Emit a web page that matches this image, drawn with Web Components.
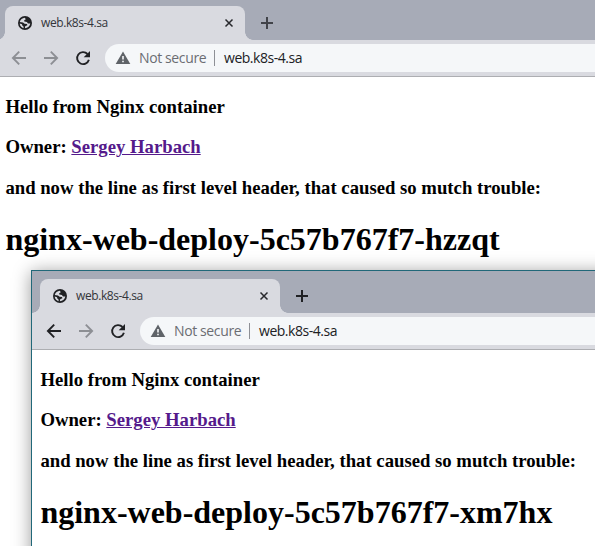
<!DOCTYPE html>
<html lang="en">
<head>
<meta charset="utf-8">
<title>web.k8s-4.sa</title>
<style>
html, body { margin: 0; height: 100%; overflow: hidden; background: #fff; }
</style>
</head>
<body>
<desk-top></desk-top>
<script>
const define = (name, html) => customElements.define(name, class extends HTMLElement {
  constructor() {
    super();
    const t = document.createElement('template');
    t.innerHTML = html;
    this.attachShadow({ mode: 'open' }).append(t.content.cloneNode(true));
  }
});

define('browser-tab', `
<style>
:host { display: flex; box-sizing: border-box; position: relative; width: 240px; height: 34px; padding: 0 9px 0 13px;
  align-items: center; background: #d9dae0; border-radius: 8px 8px 0 0;
  font: 12px/16px "Open Sans", "Noto Sans", sans-serif; color: #33353a; }
:host::before, :host::after { content: ""; position: absolute; bottom: 0; width: 8px; height: 8px; }
:host::before { left: -8px; background: radial-gradient(circle at 0 0, transparent 7.5px, #d9dae0 8px); }
:host::after { right: -8px; background: radial-gradient(circle at 100% 0, transparent 7.5px, #d9dae0 8px); }
.title { flex: 1; margin-left: 9px; letter-spacing: -0.41px; white-space: nowrap; }
svg { flex: none; display: block; }
</style>
<svg width="14" height="14" viewBox="0 0 14 14"><circle cx="7" cy="7" r="7" fill="#202124"/>
<path d="M6.800 1.700C4.400 1.900 2.300 3.500 1.800 5.900L5 6.400 6.600 7.700 9 8.100 9.400 9.300 7.200 10.200 6.900 12.300C9.700 12.300 12 10.300 12.300 7.600L10 7.500 8.900 5.900 6.300 5.400 6.200 4.200 7.800 3.300Z" fill="#d9dae0"/>
<path d="M1.700 7.600C1.900 10 3.500 11.700 5.600 12.200L5.500 10.500 4.300 9.600 4 8.300Z" fill="#d9dae0"/></svg>
<span class="title"><slot></slot></span>
<svg width="14" height="14" viewBox="0 0 14 14"><path d="M3.500 3.500l7 7M10.500 3.500l-7 7" stroke="#28292d" stroke-width="1.500" fill="none"/></svg>
`);

define('address-bar', `
<style>
:host { display: flex; flex: 1; box-sizing: border-box; height: 28px; padding-left: 10px; align-items: center;
  background: #f5f7f9; border-radius: 14px 0 0 14px; white-space: nowrap;
  font: 14px/18px "Open Sans", "Noto Sans", sans-serif; color: #202124; }
svg { flex: none; display: block; }
.state { width: 67px; margin-left: 8px; color: #6b6d73; letter-spacing: -0.38px; }
i { width: 1px; height: 16px; margin: 0 9px 0 8px; background: #8e9096; }
.url { letter-spacing: -0.47px; }
</style>
<svg width="16" height="16" viewBox="0 0 16 16"><path d="M8 1.500L15.300 14H.7Z" fill="#5f6368"/><path d="M7.200 6h1.600v3.500H7.200zM7.200 10.700h1.600v1.500H7.200z" fill="#f5f7f9"/></svg>
<span class="state">Not secure</span><i></i><span class="url"><slot></slot></span>
`);

define('browser-window', `
<style>
:host { display: block; background: #fff; }
.strip { display: flex; height: 42px; padding-left: 8px; align-items: flex-end; background: #a7abb7; }
.plus { display: block; margin: 0 0 10px 15px; color: var(--plus, #414349); }
.bar { display: flex; height: 36px; align-items: center; background: #d9dae0; border-bottom: 1px solid #adaeb2; }
.nav { display: flex; gap: 16px; padding: 0 14px; color: #202124; }
.nav svg { display: block; fill: none; stroke: currentColor; stroke-width: 1.900; }
.back { color: var(--back, #202124); }
.forward { color: #8d8f94; }
.page { display: flow-root; padding: 0 8px 0 8.400px; }
</style>
<div class="strip"><browser-tab>web.k8s-4.sa</browser-tab>
<svg class="plus" width="14" height="14" viewBox="0 0 14 14"><path d="M7 1v12M1 7h12" stroke="currentColor" stroke-width="2"/></svg></div>
<div class="bar"><div class="nav">
<svg class="back" width="16" height="16" viewBox="0 0 16 16"><path d="M15 8H2.200M8.200 1.700L1.900 8l6.300 6.300"/></svg>
<svg class="forward" width="16" height="16" viewBox="0 0 16 16"><path d="M1 8h12.800M7.800 1.700L14.100 8l-6.300 6.300"/></svg>
<svg width="16" height="16" viewBox="0 0 16 16"><path d="M12.500 4A6 6 0 1 0 13.900 9.800"/><path d="M15 1v6.300H8.700Z" fill="currentColor" stroke="none"/></svg>
</div><address-bar>web.k8s-4.sa</address-bar></div>
<div class="page"><slot></slot></div>
`);

define('nginx-page', `
<style>
:host { display: flow-root; font: 16px "Liberation Serif", serif; color: #000; white-space: nowrap; }
h3 { font-size: 18.720px; margin: 18.720px 0; }
h1 { font-size: 32px; margin: 21.440px 0; }
a { color: #551a8b; text-decoration: underline; }
</style>
<h3>Hello from Nginx container</h3>
<h3>Owner: <a href="#">Sergey Harbach</a></h3>
<h3>and now the line as first level header, that caused so mutch trouble:</h3>
<h1><slot></slot></h1>
`);

define('desk-top', `
<style>
:host { display: block; position: relative; width: 595px; height: 546px; overflow: hidden; background: #fff; }
browser-window { position: absolute; }
.rear { left: -3px; top: -2px; width: 700px; height: 600px; --back: #8d8f94; }
.front { left: 31px; top: 270px; width: 700px; height: 400px; border: 1px solid #216879; --plus: #202124;
  box-shadow: 0 2px 17px rgba(0,0,0,.4); }
</style>
<browser-window class="rear"><nginx-page>nginx-web-deploy-5c57b767f7-hzzqt</nginx-page></browser-window>
<browser-window class="front"><nginx-page>nginx-web-deploy-5c57b767f7-xm7hx</nginx-page></browser-window>
`);
</script>
</body>
</html>
